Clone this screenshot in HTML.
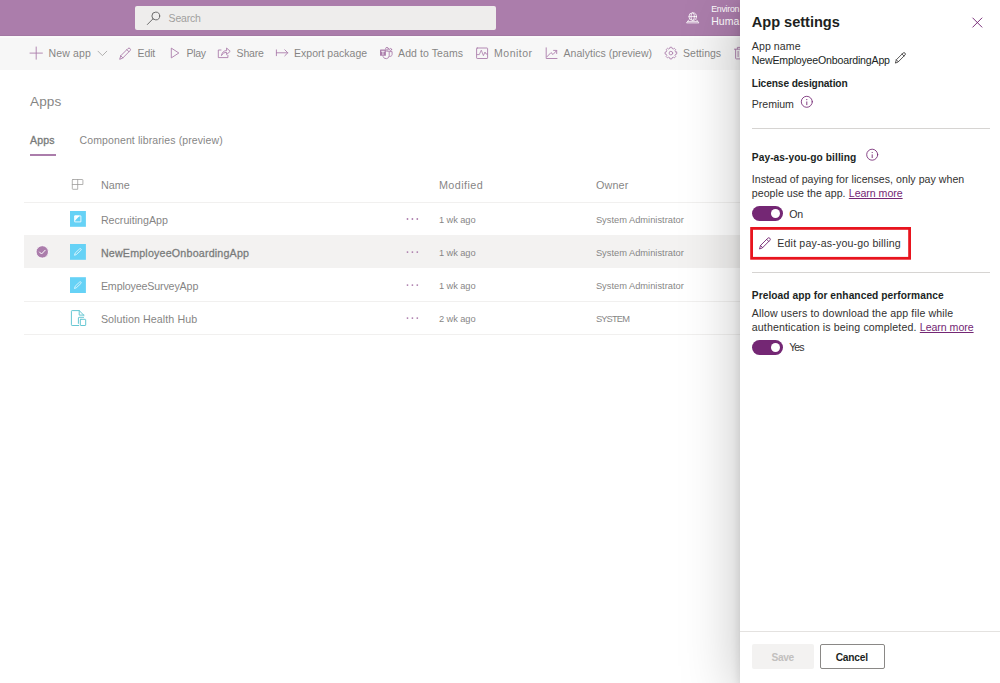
<!DOCTYPE html>
<html lang="en">
<head>
<meta charset="utf-8">
<title>Apps - Power Apps</title>
<style>
*{box-sizing:border-box;margin:0;padding:0}
html,body{width:1000px;height:683px;overflow:hidden;background:#fff}
body{font-family:"Liberation Sans",Arial,sans-serif;position:relative}
.t{position:absolute;white-space:pre;line-height:normal}
.abs{position:absolute}
h1,h2,a,button{font-family:inherit;margin:0;padding:0}
.btn{display:block;overflow:visible;font-size:10px}
#bg{position:absolute;left:0;top:0;width:1000px;height:683px;background:#fff}
#hdr{position:absolute;left:0;top:0;width:1000px;height:35.7px;background:#742774;border-bottom:1px solid #671f67}
#search{position:absolute;left:135px;top:5.8px;width:361.3px;height:24px;background:#e3e1df;border-radius:2px}
#cmd{position:absolute;left:0;top:36px;width:1000px;height:33.6px;background:#f2f2f2;border-top:2px solid #f9f9f9}
.hl{position:absolute;height:1px;background:#e8e6e4}
#selrow{position:absolute;left:24px;top:234.9px;width:730px;height:33px;background:#ebe9e8}
#overlay{position:absolute;left:0;top:0;width:1000px;height:683px;background:rgba(255,255,255,.4)}
#panel{position:absolute;left:740px;top:0;width:260px;height:683px;background:#fff;box-shadow:0 10px 54px rgba(0,0,0,.25),0 3px 9px rgba(0,0,0,.12)}
svg{position:absolute;overflow:visible}
.tog{position:absolute;width:31px;height:15.4px;border-radius:8px;background:#742774}
.tog i{position:absolute;right:2.6px;top:2.9px;width:9.6px;height:9.6px;border-radius:50%;background:#fff}
</style>
</head>
<body>
<div id="bg">
  <div id="hdr"></div>
  <div id="search"></div>
  <div id="cmd"></div>
  <div id="selrow"></div>
  <svg width="1000" height="683" viewBox="0 0 1000 683" style="left:0;top:0" fill="none" stroke-linecap="round" stroke-linejoin="round">
<g stroke="#000" stroke-width=".95"><circle cx="155.8" cy="16" r="3.9"/><path d="M153 18.8 L147.4 24.5"/></g>
<g stroke="#fff" stroke-width=".8"><circle cx="692.7" cy="16.6" r="3.8"/><ellipse cx="692.7" cy="16.6" rx="1.7" ry="3.8"/><path d="M689 16.6 H696.4 M688.7 20 L686.5 22.9 H698.9 L696.7 20 M688 21.6 H697.4" /></g>
<g stroke="#742774" stroke-width=".9">
<path d="M36.2 47 V59.2 M30 53.1 H42.4"/>
<path d="M98 51.2 L102.4 55.6 L106.8 51.2" stroke="#605e5c" stroke-width=".8"/>
<g transform="translate(119.2 47.3) scale(1.02)"><path d="M0.6 11.4 L1.5 8.3 L8.6 1.2 a1.45 1.45 0 0 1 2.05 2.05 L3.6 10.4 Z M7.5 2.3 L9.6 4.4 M1.5 8.3 L3.6 10.4"/></g>
<path d="M171.3 48.5 V57.9 L178.5 53.2 Z"/>
<path d="M221 50 H218.3 V57.6 H227.9 V55.4"/><path d="M221.6 55.2 C222 52.2 224 50.6 226.6 50.6 V48 L230.2 51.3 L226.6 54.6 V52.4 C224.4 52.4 222.8 53.2 221.6 55.2 Z"/>
<path d="M276.4 49.9 V55.7 M276.4 52.8 H287.8 M284.8 49.8 L287.8 52.8 L284.8 55.8"/>
<rect x="380" y="49.6" width="5.9" height="6.2" rx=".6" fill="#742774" stroke="none"/>
<path d="M381.6 51.3 H384.3 M382.95 51.3 V54.6" stroke="#fff" stroke-width=".8"/>
<circle cx="387" cy="48.8" r="1.4"/><path d="M386.6 51.2 H389.2 V55.6 A3.2 3.2 0 0 1 383 56.6"/>
<circle cx="390.6" cy="49.5" r="1.05"/><path d="M389.8 51.6 H392.1 V54.6 A1.9 1.9 0 0 1 389.6 56.4"/>
<rect x="476.6" y="48" width="11" height="10.5" rx=".6"/><path d="M477 54.6 H479.3 L481.3 50.2 L483.4 55.6 L485 52 L486 54 H487.3" stroke-width=".8"/>
<path d="M546.2 47.8 V58.5 H557 M547 56.7 L551 52.6 L553 54.5 L556.6 50.6 M553.6 50.4 H556.7 V53.5"/>
<path d="M676.72 52.13 L676.72 54.07 L675.56 54.26 L675.01 55.58 L675.70 56.53 L674.33 57.90 L673.38 57.21 L672.06 57.76 L671.87 58.92 L669.93 58.92 L669.74 57.76 L668.42 57.21 L667.47 57.90 L666.10 56.53 L666.79 55.58 L666.24 54.26 L665.08 54.07 L665.08 52.13 L666.24 51.94 L666.79 50.62 L666.10 49.67 L667.47 48.30 L668.42 48.99 L669.74 48.44 L669.93 47.28 L671.87 47.28 L672.06 48.44 L673.38 48.99 L674.33 48.30 L675.70 49.67 L675.01 50.62 L675.56 51.94Z" stroke-width=".85"/><circle cx="670.9" cy="53.1" r="1.8" stroke-width=".85"/>
<path d="M734.4 49.2 H744.6 M737.4 49 V47.4 H741.6 V49 M735.6 49.4 V58.2 Q735.6 58.9 736.3 58.9 H742.7 Q743.4 58.9 743.4 58.2 V49.4 M738.1 51.4 V56.6 M740.9 51.4 V56.6"/>
</g>
<path d="M72.9 179.5 H82.3 Q82.9 179.5 82.9 180.1 V184.5 H77.7 V189.3 H72.9 Q72.3 189.3 72.3 188.7 V180.1 Q72.3 179.5 72.9 179.5 Z M77.7 179.5 V184.5 M72.3 184.5 H77.7" stroke="#605e5c" stroke-width=".8"/>
<rect x="70" y="211" width="15.9" height="15.8" fill="#00b4f0" stroke="none"/>
<g stroke="#fff" stroke-width=".8"><rect x="75.1" y="215.9" width="5.8" height="6"/><path d="M75.1 215.9 H79.2 L75.1 220.1 Z" fill="#fff"/></g>
<rect x="70" y="244" width="15.9" height="15.8" fill="#00b4f0" stroke="none"/>
<g stroke="#fff" stroke-width=".7"><path d="M74.6 254.9 L75.2 253.0 L79.6 248.9 a.95 .95 0 0 1 1.35 1.35 L76.5 254.4 Z"/></g>
<rect x="70" y="277.2" width="15.9" height="15.8" fill="#00b4f0" stroke="none"/>
<g stroke="#fff" stroke-width=".7"><path d="M74.6 288.09999999999997 L75.2 286.2 L79.6 282.09999999999997 a.95 .95 0 0 1 1.35 1.35 L76.5 287.59999999999997 Z"/></g>
<g stroke="#00a2b6" stroke-width="1"><path d="M78.8 325.5 H72.1 Q71.4 325.5 71.4 324.8 V311.3 Q71.4 310.6 72.1 310.6 H79.2 L83.9 315.3 M79.2 310.6 V315.1 H83.9"/><path d="M78.4 323.4 V317.9 Q78.4 317.3 79 317.3 H83.6"/><rect x="80.3" y="319.3" width="5.4" height="6.2" rx=".5" fill="#fff"/></g>
<circle cx="42.3" cy="251.9" r="6.2" fill="#742774" stroke="#fff" stroke-width=".8"/><path d="M39.5 252 L41.5 254 L45.2 250.2" stroke="#fff" stroke-width="1"/>
<circle cx="407.5" cy="219.0" r=".9" fill="#742774" stroke="none"/>
<circle cx="412.4" cy="219.0" r=".9" fill="#742774" stroke="none"/>
<circle cx="417.3" cy="219.0" r=".9" fill="#742774" stroke="none"/>
<circle cx="407.5" cy="252.1" r=".9" fill="#742774" stroke="none"/>
<circle cx="412.4" cy="252.1" r=".9" fill="#742774" stroke="none"/>
<circle cx="417.3" cy="252.1" r=".9" fill="#742774" stroke="none"/>
<circle cx="407.5" cy="285.1" r=".9" fill="#742774" stroke="none"/>
<circle cx="412.4" cy="285.1" r=".9" fill="#742774" stroke="none"/>
<circle cx="417.3" cy="285.1" r=".9" fill="#742774" stroke="none"/>
<circle cx="407.5" cy="318.1" r=".9" fill="#742774" stroke="none"/>
<circle cx="412.4" cy="318.1" r=".9" fill="#742774" stroke="none"/>
<circle cx="417.3" cy="318.1" r=".9" fill="#742774" stroke="none"/>
</svg>
  <div class="abs" style="left:30.3px;top:154.3px;width:25.4px;height:1.6px;background:#742774"></div>
  <div class="hl" style="left:24px;top:201.9px;width:730px"></div>
  <div class="hl" style="left:24px;top:301.1px;width:730px"></div>
  <div class="hl" style="left:24px;top:334px;width:730px"></div>

<span class="t" style="left:168.6px;top:12.00px;font-size:10.5px;color:#605e5c;letter-spacing:-0.214px;">Search</span>
<span class="t" style="left:711.2px;top:4.00px;font-size:8.8px;color:#ffffff;letter-spacing:-0.261px;">Environ</span>
<span class="t" style="left:711.2px;top:15.00px;font-size:10.5px;color:#ffffff;letter-spacing:0.046px;">Huma</span>
<span class="t" style="left:48.6px;top:47.00px;font-size:10.5px;color:#323130;letter-spacing:0.121px;">New app</span>
<span class="t" style="left:137.6px;top:47.00px;font-size:10.5px;color:#323130;letter-spacing:-0.148px;">Edit</span>
<span class="t" style="left:186.6px;top:47.00px;font-size:10.5px;color:#323130;letter-spacing:-0.359px;">Play</span>
<span class="t" style="left:236.6px;top:47.00px;font-size:10.5px;color:#323130;letter-spacing:-0.206px;">Share</span>
<span class="t" style="left:294.1px;top:47.00px;font-size:10.5px;color:#323130;letter-spacing:0.002px;">Export package</span>
<span class="t" style="left:398.1px;top:47.00px;font-size:10.5px;color:#323130;letter-spacing:0.082px;">Add to Teams</span>
<span class="t" style="left:494.1px;top:47.00px;font-size:10.5px;color:#323130;letter-spacing:0.498px;">Monitor</span>
<span class="t" style="left:563.6px;top:47.00px;font-size:10.5px;color:#323130;letter-spacing:0.021px;">Analytics (preview)</span>
<span class="t" style="left:683.1px;top:47.00px;font-size:10.5px;color:#323130;letter-spacing:0.006px;">Settings</span>
<h1 class="t" style="left:30.1px;top:94.00px;font-size:13.6px;font-weight:400;color:#323130;letter-spacing:0.054px;">Apps</h1>
<span class="t" style="left:30.1px;top:134.00px;font-size:10.5px;color:#201f1e;letter-spacing:0.191px;-webkit-text-stroke:.35px #201f1e;">Apps</span>
<span class="t" style="left:79.6px;top:134.00px;font-size:10.5px;color:#323130;letter-spacing:0.108px;">Component libraries (preview)</span>
<span class="t" style="left:100.9px;top:179.00px;font-size:10.8px;color:#323130;letter-spacing:0.022px;">Name</span>
<span class="t" style="left:438.9px;top:179.00px;font-size:10.8px;color:#323130;letter-spacing:0.423px;">Modified</span>
<span class="t" style="left:595.9px;top:179.00px;font-size:10.8px;color:#323130;letter-spacing:0.178px;">Owner</span>
<span class="t" style="left:100.9px;top:214.00px;font-size:10.7px;color:#323130;letter-spacing:-0.011px;">RecruitingApp</span>
<span class="t" style="left:438.9px;top:215.00px;font-size:9.3px;color:#323130;letter-spacing:-0.065px;">1 wk ago</span>
<span class="t" style="left:595.9px;top:215.00px;font-size:9.3px;color:#323130;letter-spacing:0.003px;">System Administrator</span>
<span class="t" style="left:100.9px;top:247.00px;font-size:10.7px;color:#201f1e;letter-spacing:0.188px;-webkit-text-stroke:.3px #201f1e;">NewEmployeeOnboardingApp</span>
<span class="t" style="left:438.9px;top:248.00px;font-size:9.3px;color:#323130;letter-spacing:-0.065px;">1 wk ago</span>
<span class="t" style="left:595.9px;top:248.00px;font-size:9.3px;color:#323130;letter-spacing:0.003px;">System Administrator</span>
<span class="t" style="left:100.9px;top:280.00px;font-size:10.7px;color:#323130;letter-spacing:-0.148px;">EmployeeSurveyApp</span>
<span class="t" style="left:438.9px;top:281.00px;font-size:9.3px;color:#323130;letter-spacing:-0.065px;">1 wk ago</span>
<span class="t" style="left:595.9px;top:281.00px;font-size:9.3px;color:#323130;letter-spacing:0.003px;">System Administrator</span>
<span class="t" style="left:100.9px;top:313.00px;font-size:10.7px;color:#323130;letter-spacing:0.065px;">Solution Health Hub</span>
<span class="t" style="left:438.9px;top:314.00px;font-size:9.3px;color:#323130;letter-spacing:-0.065px;">2 wk ago</span>
<span class="t" style="left:595.9px;top:314.00px;font-size:9.3px;color:#323130;letter-spacing:-0.839px;">SYSTEM</span>
</div>
<div id="overlay"></div>
<div id="panel"></div>
<div id="pc" class="abs" style="left:0;top:0;width:1000px;height:683px">
  <div class="abs" style="left:752px;top:128px;width:237.5px;height:1px;background:#d6d4d2"></div>
  <div class="abs" style="left:752px;top:272px;width:237.5px;height:1px;background:#d6d4d2"></div>
  <div class="abs" style="left:740px;top:630.5px;width:260px;height:1px;background:#e4e2e0"></div>
  <div class="tog" style="left:752px;top:206px"><i></i></div>
  <div class="tog" style="left:752px;top:339.8px"><i></i></div>
  <button type="button" disabled class="abs btn" style="left:752px;top:644px;width:61.8px;height:24.6px;background:#f3f2f1;border:0;border-radius:2px"><span class="t" style="left:19.5px;top:8.00px;font-size:10.2px;font-weight:700;color:#c2c0be;letter-spacing:-0.349px;">Save</span></button>
  <button type="button" class="abs btn" style="left:820px;top:644px;width:64.8px;height:24.6px;border:1px solid #8a8886;border-radius:2px;background:#fff"><span class="t" style="left:14.7px;top:7.00px;font-size:10.2px;font-weight:700;color:#201f1e;letter-spacing:-0.220px;">Cancel</span></button>
  <svg width="1000" height="683" viewBox="0 0 1000 683" style="left:0;top:0" fill="none" stroke-linecap="round" stroke-linejoin="round">
<rect x="751.6" y="228.4" width="158" height="29.9" stroke="#e8141e" stroke-width="2.8" stroke-linejoin="miter"/>
<path d="M972.8 18 L981.9 27.1 M981.9 18 L972.8 27.1" stroke="#742774" stroke-width=".95"/>
<g stroke="#323130" stroke-width=".85"><g transform="translate(894.9 51.9) scale(0.95)"><path d="M0.6 11.4 L1.5 8.3 L8.6 1.2 a1.45 1.45 0 0 1 2.05 2.05 L3.6 10.4 Z M7.5 2.3 L9.6 4.4 M1.5 8.3 L3.6 10.4"/></g></g>
<g stroke="#742774" stroke-width=".9"><g transform="translate(759 237) scale(1.02)"><path d="M0.6 11.4 L1.5 8.3 L8.6 1.2 a1.45 1.45 0 0 1 2.05 2.05 L3.6 10.4 Z M7.5 2.3 L9.6 4.4 M1.5 8.3 L3.6 10.4"/></g></g>
<circle cx="806.8" cy="101.8" r="5.5" stroke="#742774" stroke-width=".85"/><path d="M806.8 101.5 V105.1" stroke="#742774" stroke-width=".9" stroke-linecap="butt"/><circle cx="806.8" cy="99.6" r=".6" fill="#742774"/>
<circle cx="872.2" cy="154.7" r="5.5" stroke="#742774" stroke-width=".85"/><path d="M872.2 154.39999999999998 V158.0" stroke="#742774" stroke-width=".9" stroke-linecap="butt"/><circle cx="872.2" cy="152.5" r=".6" fill="#742774"/>
</svg>
<h2 class="t" style="left:751.8px;top:14.00px;font-size:14.6px;font-weight:700;color:#201f1e;letter-spacing:-0.031px;">App settings</h2>
<span class="t" style="left:751.8px;top:40.00px;font-size:10.6px;color:#323130;letter-spacing:0.063px;">App name</span>
<span class="t" style="left:751.8px;top:54.00px;font-size:10.6px;color:#201f1e;letter-spacing:-0.188px;">NewEmployeeOnboardingApp</span>
<span class="t" style="left:751.8px;top:78.00px;font-size:10.2px;font-weight:700;color:#201f1e;letter-spacing:-0.113px;">License designation</span>
<span class="t" style="left:751.8px;top:98.00px;font-size:10.6px;color:#323130;letter-spacing:-0.042px;">Premium</span>
<span class="t" style="left:751.8px;top:152.00px;font-size:10.2px;font-weight:700;color:#201f1e;letter-spacing:0.071px;">Pay-as-you-go billing</span>
<span class="t" style="left:751.8px;top:173.00px;font-size:10.6px;color:#323130;letter-spacing:0.037px;">Instead of paying for licenses, only pay when</span>
<span class="t" style="left:751.8px;top:187.00px;font-size:10.6px;color:#323130;letter-spacing:0.038px;">people use the app.</span>
<a class="t" style="left:848.8px;top:187.00px;font-size:10.6px;color:#742774;letter-spacing:-0.039px;text-decoration:underline;text-underline-offset:1px;">Learn more</a>
<span class="t" style="left:789.2px;top:208.00px;font-size:10.6px;color:#323130;letter-spacing:-0.270px;">On</span>
<span class="t" style="left:777.3px;top:237.00px;font-size:10.6px;color:#323130;letter-spacing:0.175px;">Edit pay-as-you-go billing</span>
<span class="t" style="left:751.8px;top:290.00px;font-size:10.2px;font-weight:700;color:#201f1e;letter-spacing:0.062px;">Preload app for enhanced performance</span>
<span class="t" style="left:751.8px;top:307.00px;font-size:10.6px;color:#323130;letter-spacing:0.128px;">Allow users to download the app file while</span>
<span class="t" style="left:751.8px;top:321.00px;font-size:10.6px;color:#323130;letter-spacing:0.135px;">authentication is being completed.</span>
<a class="t" style="left:919.8px;top:321.00px;font-size:10.6px;color:#742774;letter-spacing:-0.039px;text-decoration:underline;text-underline-offset:1px;">Learn more</a>
<span class="t" style="left:789.2px;top:341.00px;font-size:10.6px;color:#323130;letter-spacing:-0.966px;">Yes</span>
</div>
</body>
</html>
